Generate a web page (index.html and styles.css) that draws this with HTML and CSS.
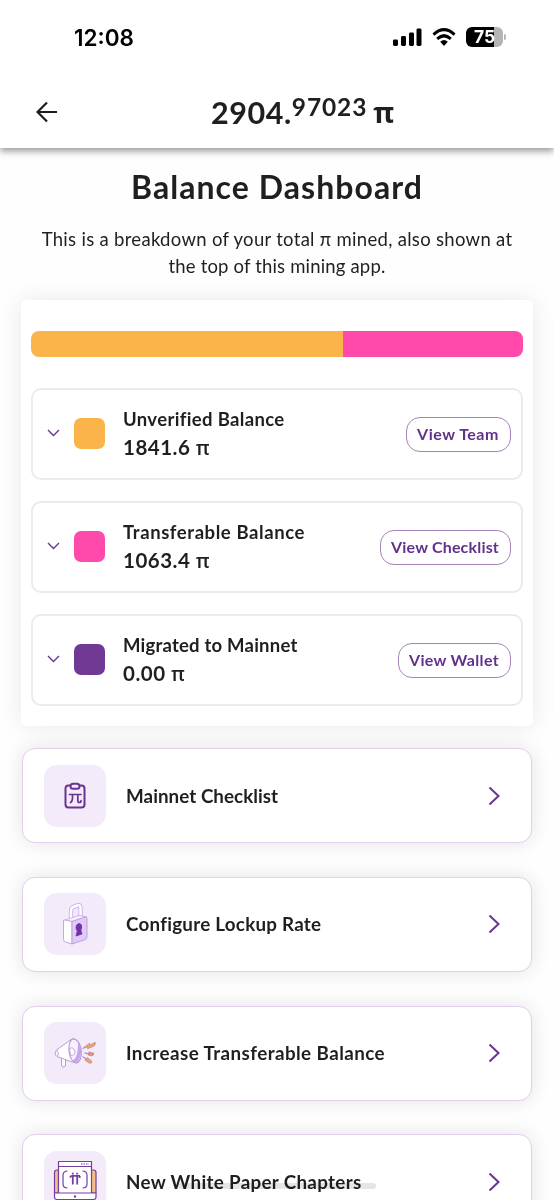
FILE: index.html
```html
<!DOCTYPE html>
<html lang="en">
<head>
<meta charset="utf-8">
<title>Balance Dashboard</title>
<link rel="stylesheet" href="styles.css">
</head>
<body>
<div class="app">
  <header class="top">
    <div class="status">
      <span class="clock">12:08</span>
      <div class="signals">
        <svg width="29" height="18" viewBox="0 0 29 18"><rect x="0" y="11.5" width="5" height="6.5" rx="1.4"/><rect x="8" y="8" width="5" height="10" rx="1.4"/><rect x="16" y="4.5" width="5" height="13.5" rx="1.4"/><rect x="23.5" y="0.5" width="5" height="17.5" rx="1.4"/></svg>
        <svg width="24" height="18" viewBox="0 0 26 18" preserveAspectRatio="none"><g fill="none" stroke="#000" stroke-width="3.2"><path d="M1.6 6.6Q13-3.2 24.4 6.6"/><path d="M5.6 10.9Q13 4.6 20.4 10.9"/></g><path d="M8.9 13.8Q13 10.4 17.1 13.8L13 18Z"/></svg>
        <div class="battery"><div class="cell"><span>75</span></div><div class="nub"></div></div>
      </div>
    </div>
    <div class="titlebar">
      <svg class="back" width="22" height="22" viewBox="0 0 22 22"><path d="M21 11H2M11 1.5L1.5 11L11 20.5"/></svg>
      <div class="total"><span class="whole">2904.</span><span class="fraction">97023</span><span class="pi">π</span></div>
    </div>
  </header>
  <main>
    <h1>Balance Dashboard</h1>
    <p class="intro">This is a breakdown of your total π mined, also shown at<br><span class="second">the top of this mining app.</span></p>
    <section class="panel">
      <div class="bar"><div class="bar-unverified" style="width:63.4%"></div><div class="bar-transferable"></div></div>
      <div class="row">
        <svg class="down" width="13" height="8" viewBox="0 0 13 8"><path d="M1 1L6.5 6.5L12 1"/></svg>
        <div class="swatch orange"></div>
        <div class="info"><div class="label unverified">Unverified Balance</div><div class="amount">1841.6 <span>π</span></div></div>
        <button class="team">View Team</button>
      </div>
      <div class="row">
        <svg class="down" width="13" height="8" viewBox="0 0 13 8"><path d="M1 1L6.5 6.5L12 1"/></svg>
        <div class="swatch pink"></div>
        <div class="info"><div class="label transferable">Transferable Balance</div><div class="amount">1063.4 <span>π</span></div></div>
        <button class="checklist">View Checklist</button>
      </div>
      <div class="row">
        <svg class="down" width="13" height="8" viewBox="0 0 13 8"><path d="M1 1L6.5 6.5L12 1"/></svg>
        <div class="swatch purple"></div>
        <div class="info"><div class="label migrated">Migrated to Mainnet</div><div class="amount">0.00 <span>π</span></div></div>
        <button class="wallet">View Wallet</button>
      </div>
    </section>
    <nav class="links">
      <a class="link">
        <div class="tile"><svg width="62" height="62" viewBox="0 0 62 62" fill="none" stroke="#683491" stroke-width="2" stroke-linecap="round" stroke-linejoin="round"><path d="M26 20.5H24.5Q21.5 20.5 21.5 23.5V39.5Q21.5 42.500 24.500 42.500H37.500Q40.500 42.500 40.500 39.500V23.500Q40.500 20.500 37.500 20.500H36"/><rect x="26.500" y="18.700" width="9" height="5" rx="2.500"/><path stroke-width="1.700" d="M25.500 29.500H37M28.500 29.500V33Q28.500 36.500 26.500 37.500M33.800 29.500V35.500Q33.800 37.500 35.500 37.500Q37 37.500 37 35.700"/></svg></div>
        <span class="name n1">Mainnet Checklist</span>
        <svg class="next" width="12" height="20" viewBox="0 0 12 20"><path d="M1.500 1.500L10.500 10L1.500 18.500"/></svg>
      </a>
      <a class="link">
        <div class="tile"><svg width="62" height="62" viewBox="0 0 62 62" stroke-linejoin="round"><path d="M27 27V17.500Q27 15 29.500 14L33 12.500Q36.500 11.200 36.500 14.500V25" fill="none" stroke="#c8a7e8" stroke-width="4.200"/><path d="M27 27V17.500Q27 15 29.500 14L33 12.500Q36.500 11.200 36.500 14.500V25" fill="none" stroke="#fff" stroke-width="2.600"/><path d="M19.500 27.500L35 22.500L42.500 23.800L28 28.500Z" fill="#f8efff" stroke="#c8a7e8" stroke-width=".8"/><path d="M19.500 28Q19 26.800 21 27L28 28.500V51L21.500 49Q19.500 48.300 19.500 46.500Z" fill="#fff" stroke="#c8a7e8"/><path d="M28 28.500L41 24Q43 23.500 43 25.500V44Q43 46 41 46.800L28 51Z" fill="#dfcbf5" stroke="#b894dc" stroke-width=".8"/><path d="M32 34Q32.500 30.500 35.500 30.500Q38.500 31 37.500 35.500L36.800 37L38 41L32 43L33.300 38Q31.800 36.500 32 34Z" fill="#7430ae" stroke="#7430ae" stroke-width=".8"/></svg></div>
        <span class="name n2">Configure Lockup Rate</span>
        <svg class="next" width="12" height="20" viewBox="0 0 12 20"><path d="M1.500 1.500L10.500 10L1.500 18.500"/></svg>
      </a>
      <a class="link">
        <div class="tile"><svg width="62" height="62" viewBox="0 0 62 62" stroke-linejoin="round"><rect x="17.500" y="34" width="4" height="11" rx="2" fill="#fff" stroke="#b99cd6"/><path d="M12.500 28L27 17.500Q31 15 35 21Q39 29 35.500 38Q33.500 42 29.500 40.500L13 34.500Q9.500 32 12.500 28Z" fill="#fff" stroke="#b99cd6"/><path d="M12.500 28Q15.500 31 13.500 34.500" fill="none" stroke="#b99cd6"/><ellipse cx="31" cy="29" rx="6" ry="12" transform="rotate(-8 31 29)" fill="#f8f1ff" stroke="#b294d2"/><path d="M34 18.500Q39.500 29 35 38Q32.500 42.500 28.500 38.500Q34.500 36 34 18.500Z" fill="#c6a6ea"/><path d="M25.500 26.500Q29 24.500 31 29Q31.500 33.500 26.500 33.500Z" fill="#fff" stroke="#b294d2" stroke-width=".8"/><g stroke="#a479b5" stroke-width=".6" fill="#f5a653"><path d="M38.500 26.500L45.500 21.200L45.800 23L51 20.300Q52.500 22 50 24L43.500 26.800L43.800 25Z"/><path d="M40.500 31L45 31.300L44.800 30L49.500 31Q50.500 33.500 47.500 33.800L44 33L44.500 32Z" fill="#ef9060"/><path d="M38.500 34.500L42.800 36.800L43.200 35.500L47.500 38.800Q48.500 42 45 41L40.800 38L42 37.500Z"/></g></svg></div>
        <span class="name n3">Increase Transferable Balance</span>
        <svg class="next" width="12" height="20" viewBox="0 0 12 20"><path d="M1.500 1.500L10.500 10L1.500 18.500"/></svg>
      </a>
      <a class="link">
        <div class="tile"><svg width="62" height="62" viewBox="0 0 62 62" fill="none" stroke="#743fa0" stroke-width="1.200" stroke-linejoin="round"><path d="M14.500 19H13Q10.500 19 10.500 21.500V42H14.500ZM47 19H49.500Q52 19 52 21.500V42H47Z" fill="#f8bd84"/><path d="M14.500 42V10.500H47.500V42" fill="#fff"/><path d="M14.500 15.500H47.500"/><path d="M37 13H45" stroke-dasharray="1.500 1"/><path d="M23.500 20Q19 20 19 24.500V33Q19 37 23.500 37M38.500 20Q43 20 43 24.500V33Q43 37 38.500 37"/><path d="M26 26.500Q26.500 24.800 28.500 24.800H36M28.800 25V33.500M33.200 25V33.500M28.800 21.800V23.500M33.200 21.800V23.500M36 25L35.500 27" stroke-width="1.800"/><path d="M10.500 42H52V46Q52 48.500 49.500 48.500H13Q10.500 48.500 10.500 46Z" fill="#fff"/><circle cx="31" cy="45.500" r=".6"/></svg></div>
        <span class="name n4">New White Paper Chapters</span>
        <svg class="next" width="12" height="20" viewBox="0 0 12 20"><path d="M1.500 1.500L10.500 10L1.500 18.500"/></svg>
      </a>
    </nav>
  </main>
  <div class="home-indicator"></div>
</div>
</body>
</html>
```
FILE: styles.css
```css
* { box-sizing: border-box; }
body { margin: 0; background: #fff; color: #1f1f1f; font-family: Lato, "Open Sans", sans-serif; }
.app { position: relative; width: 554px; height: 1200px; overflow: hidden; background: #fefefe; }
svg { display: block; flex: none; }

.top { height: 148px; background: #fff; box-shadow: 0 3px 7px 0 rgba(0,0,0,.42); }
.status { height: 76px; padding: 0 48px 0 74px; display: flex; justify-content: space-between; align-items: center; }
.clock { margin-top: -1px; font: 600 22.5px Inter, sans-serif; color: #000; }
.signals { display: flex; align-items: center; gap: 10px; margin-top: -2px; }
.battery { display: flex; align-items: center; gap: 1px; }
.cell { width: 37px; height: 20px; border-radius: 6px; background: linear-gradient(90deg, #000 75%, #b5b5b5 75%); color: #fff; font: 700 17.500px/20px Inter, sans-serif; text-align: center; }
.nub { width: 2px; height: 6px; border-radius: 0 2px 2px 0; background: #b5b5b5; }
.titlebar { height: 72px; padding-left: 36px; display: flex; align-items: center; }
.back { fill: none; stroke: #1c1c1c; stroke-width: 2.200; }
.total { display: flex; align-items: flex-start; margin-left: 153px; height: 36px; }
.whole { font-size: 30.500px; line-height: 36px; font-weight: 700; letter-spacing: .55px; }
.fraction { font-size: 24.500px; line-height: 26px; font-weight: 700; letter-spacing: .9px; }
.pi { margin-left: 6px; font: 700 28.500px/37px "Open Sans", sans-serif; }

main { padding: 19px 21px 0; }
h1 { margin: 0; font-size: 32px; line-height: 39px; font-weight: 700; letter-spacing: 1.050px; text-align: center; }
.intro { margin: 20px -10px 0; font-size: 18.500px; line-height: 27px; letter-spacing: .3px; text-align: center; }
.second { letter-spacing: .17px; }
.panel { margin-top: 20px; height: 426px; padding: 31px 10px 21px; border-radius: 5px; background: #fff; box-shadow: 0 0 24px rgba(0,0,0,.09); display: flex; flex-direction: column; gap: 21px; }
.bar { height: 26px; margin-bottom: 10px; border-radius: 8px; overflow: hidden; display: flex; flex: none; }
.bar-unverified { background: #fbb44a; }
.bar-transferable { flex: 1; background: #ff4aab; }
.row { height: 92px; flex: none; padding: 0 10px 0 14px; border: 2px solid #ebebeb; border-radius: 10px; display: flex; align-items: center; }
.down { margin-top: -2px; fill: none; stroke: #683491; stroke-width: 1.400; }
.swatch { width: 31px; height: 31px; margin: -1px 18px 0 14px; border-radius: 7px; }
.orange { background: #fbb44a; }
.pink { background: #ff4aab; }
.purple { background: #703a94; }
.info { flex: 1; margin-top: -1px; }
.label { font-size: 18.500px; line-height: 28px; font-weight: 700; }
.unverified { letter-spacing: .35px; }
.transferable { letter-spacing: .58px; }
.migrated { letter-spacing: .22px; }
.amount { font-size: 20.500px; line-height: 29px; font-weight: 700; letter-spacing: .5px; }
.amount span { font: 600 20px/20px "Open Sans", sans-serif; }
button { height: 35px; margin: 0; padding: 0 10px 1px 9px; border: 1px solid #a683bd; border-radius: 14px; background: #fff; color: #62318a; font: 700 16px Lato, sans-serif; white-space: nowrap; }
.team { width: 105px; letter-spacing: .5px; }
.checklist { width: 131px; letter-spacing: .18px; }
.wallet { width: 113px; letter-spacing: .35px; }

.links { margin: 22px 1px 0; display: flex; flex-direction: column; gap: 33.750px; }
.link { height: 95px; flex: none; padding: 0 31px 0 21px; border: 1px solid #e3ceed; border-radius: 13px; background: #fff; box-shadow: 0 0 20px rgba(0,0,0,.11); display: flex; align-items: center; }
.tile { width: 62px; height: 62px; border-radius: 13px; background: #f3eafa; }
.name { flex: 1; margin-left: 20px; font-size: 18.800px; line-height: 26px; font-weight: 700; }
.n1 { letter-spacing: .05px; }
.n2 { letter-spacing: .25px; }
.n3 { letter-spacing: .43px; }
.n4 { letter-spacing: .33px; }
.next { fill: none; stroke: #683491; stroke-width: 2; }
.home-indicator { position: absolute; left: 178px; top: 1183px; width: 198px; height: 6px; border-radius: 3px; background: #e5e5e5; mix-blend-mode: multiply; }
```
